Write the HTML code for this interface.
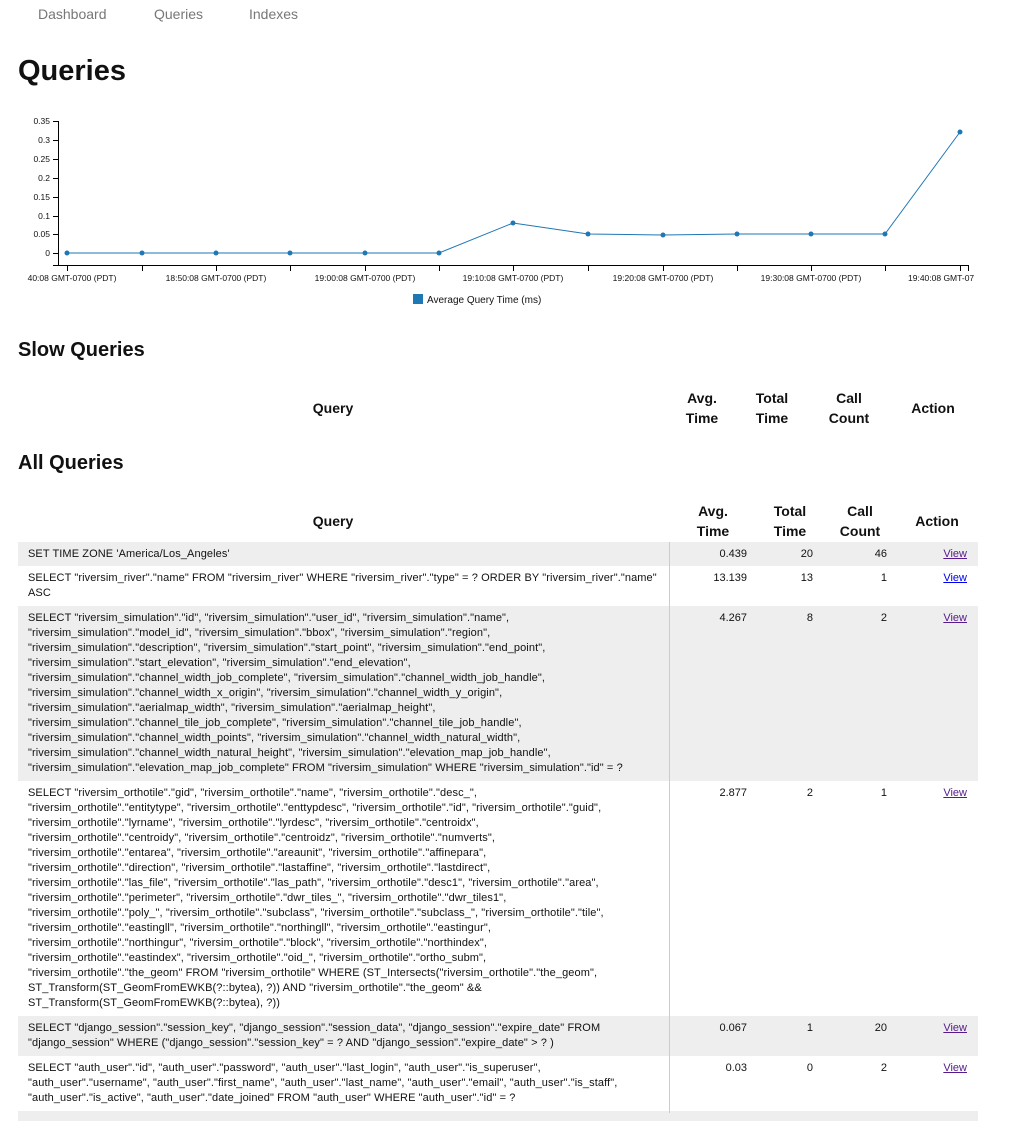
<!DOCTYPE html>
<html><head><meta charset="utf-8"><style>
*{margin:0;padding:0;box-sizing:border-box}
body{width:1018px;height:1113px;overflow:hidden;background:#fff;font-family:"Liberation Sans",sans-serif;color:#111;position:relative}
.a{position:absolute}
.nav{top:6px;font-size:14px;color:#777}
h1{position:absolute;left:18px;top:55px;font-size:29px;font-weight:bold}
h2{position:absolute;left:18px;font-size:20px;font-weight:bold}
.th{position:absolute;font-size:14px;font-weight:bold;text-align:center;line-height:20px;transform:translateX(-50%);white-space:nowrap}
.row{position:absolute;left:18px;width:960px}
.g{background:#eee}
.q{position:absolute;left:10px;top:5px;font-size:11px;line-height:15px;white-space:nowrap;letter-spacing:0.1px}
.n{position:absolute;top:5px;font-size:11px;line-height:15px;text-align:right;width:60px}
.v{position:absolute;top:5px;font-size:11px;line-height:15px;right:11px;color:#00e;text-decoration:underline}
.v.p{color:#551a8b}
.sep{position:absolute;left:669px;top:542px;width:1px;height:571px;background:#ccc}
</style></head><body>
<div class="a nav" style="left:38px">Dashboard</div>
<div class="a nav" style="left:154px">Queries</div>
<div class="a nav" style="left:249px">Indexes</div>
<h1>Queries</h1>
<svg class="a" style="left:0;top:110px" width="1018" height="200" viewBox="0 110 1018 200" font-family="Liberation Sans" font-size="8.5" fill="#111">
<g stroke="#000" stroke-width="1">
<line x1="58.5" y1="121" x2="58.5" y2="265"/>
<line x1="53" y1="265.5" x2="968" y2="265.5"/>
<line x1="968.5" y1="265" x2="968.5" y2="271"/>
<line x1="53" y1="121.5" x2="58" y2="121.5"/><line x1="53" y1="140.5" x2="58" y2="140.5"/><line x1="53" y1="159.5" x2="58" y2="159.5"/><line x1="53" y1="178.5" x2="58" y2="178.5"/><line x1="53" y1="197.5" x2="58" y2="197.5"/><line x1="53" y1="216.5" x2="58" y2="216.5"/><line x1="53" y1="234.5" x2="58" y2="234.5"/><line x1="53" y1="253.5" x2="58" y2="253.5"/>
<line x1="67.5" y1="265" x2="67.5" y2="271"/><line x1="142.5" y1="265" x2="142.5" y2="271"/><line x1="216.5" y1="265" x2="216.5" y2="271"/><line x1="290.5" y1="265" x2="290.5" y2="271"/><line x1="365.5" y1="265" x2="365.5" y2="271"/><line x1="439.5" y1="265" x2="439.5" y2="271"/><line x1="513.5" y1="265" x2="513.5" y2="271"/><line x1="588.5" y1="265" x2="588.5" y2="271"/><line x1="663.5" y1="265" x2="663.5" y2="271"/><line x1="737.5" y1="265" x2="737.5" y2="271"/><line x1="811.5" y1="265" x2="811.5" y2="271"/><line x1="885.5" y1="265" x2="885.5" y2="271"/><line x1="960.5" y1="265" x2="960.5" y2="271"/>
</g>
<g text-anchor="end">
<text x="50" y="124">0.35</text><text x="50" y="143">0.3</text><text x="50" y="162">0.25</text><text x="50" y="181">0.2</text><text x="50" y="200">0.15</text><text x="50" y="219">0.1</text><text x="50" y="237">0.05</text><text x="50" y="256">0</text>
</g>
<g text-anchor="middle">
<text x="72" y="281">40:08 GMT-0700 (PDT)</text><text x="216" y="281">18:50:08 GMT-0700 (PDT)</text><text x="365" y="281">19:00:08 GMT-0700 (PDT)</text><text x="513" y="281">19:10:08 GMT-0700 (PDT)</text><text x="663" y="281">19:20:08 GMT-0700 (PDT)</text><text x="811" y="281">19:30:08 GMT-0700 (PDT)</text>
<text x="960" y="281" text-anchor="start" dx="-52">19:40:08 GMT-07</text>
</g>
<polyline fill="none" stroke="#1f77b4" stroke-width="1" points="67,253 142,253 216,253 290,253 365,253 439,253 513,223 588,234 663,235 737,234 811,234 885,234 960,132"/>
<g fill="#1f77b4">
<circle cx="67" cy="253" r="2.5"/><circle cx="142" cy="253" r="2.5"/><circle cx="216" cy="253" r="2.5"/><circle cx="290" cy="253" r="2.5"/><circle cx="365" cy="253" r="2.5"/><circle cx="439" cy="253" r="2.5"/><circle cx="513" cy="223" r="2.5"/><circle cx="588" cy="234" r="2.5"/><circle cx="663" cy="235" r="2.5"/><circle cx="737" cy="234" r="2.5"/><circle cx="811" cy="234" r="2.5"/><circle cx="885" cy="234" r="2.5"/><circle cx="960" cy="132" r="2.5"/>
<rect x="413" y="294" width="10" height="10"/>
</g>
<text x="427" y="303" font-size="10">Average Query Time (ms)</text>
</svg>

<h2 style="top:339px">Slow Queries</h2>
<div class="th" style="left:333px;top:398px">Query</div>
<div class="th" style="left:702px;top:388px">Avg.<br>Time</div>
<div class="th" style="left:772px;top:388px">Total<br>Time</div>
<div class="th" style="left:849px;top:388px">Call<br>Count</div>
<div class="th" style="left:933px;top:398px">Action</div>

<h2 style="top:452px">All Queries</h2>
<div class="th" style="left:333px;top:511px">Query</div>
<div class="th" style="left:713px;top:501px">Avg.<br>Time</div>
<div class="th" style="left:790px;top:501px">Total<br>Time</div>
<div class="th" style="left:860px;top:501px">Call<br>Count</div>
<div class="th" style="left:937px;top:511px">Action</div>

<div class="row g" style="top:542px;height:24px"><div class="q">SET TIME ZONE 'America/Los_Angeles'</div><div class="n" style="left:669px">0.439</div><div class="n" style="left:735px">20</div><div class="n" style="left:809px">46</div><div class="v p">View</div></div>
<div class="row" style="top:566px;height:40px"><div class="q">SELECT "riversim_river"."name" FROM "riversim_river" WHERE "riversim_river"."type" = ? ORDER BY "riversim_river"."name"<br>ASC</div><div class="n" style="left:669px">13.139</div><div class="n" style="left:735px">13</div><div class="n" style="left:809px">1</div><div class="v">View</div></div>
<div class="row g" style="top:606px;height:175px"><div class="q">SELECT "riversim_simulation"."id", "riversim_simulation"."user_id", "riversim_simulation"."name",<br>"riversim_simulation"."model_id", "riversim_simulation"."bbox", "riversim_simulation"."region",<br>"riversim_simulation"."description", "riversim_simulation"."start_point", "riversim_simulation"."end_point",<br>"riversim_simulation"."start_elevation", "riversim_simulation"."end_elevation",<br>"riversim_simulation"."channel_width_job_complete", "riversim_simulation"."channel_width_job_handle",<br>"riversim_simulation"."channel_width_x_origin", "riversim_simulation"."channel_width_y_origin",<br>"riversim_simulation"."aerialmap_width", "riversim_simulation"."aerialmap_height",<br>"riversim_simulation"."channel_tile_job_complete", "riversim_simulation"."channel_tile_job_handle",<br>"riversim_simulation"."channel_width_points", "riversim_simulation"."channel_width_natural_width",<br>"riversim_simulation"."channel_width_natural_height", "riversim_simulation"."elevation_map_job_handle",<br>"riversim_simulation"."elevation_map_job_complete" FROM "riversim_simulation" WHERE "riversim_simulation"."id" = ?</div><div class="n" style="left:669px">4.267</div><div class="n" style="left:735px">8</div><div class="n" style="left:809px">2</div><div class="v p">View</div></div>
<div class="row" style="top:781px;height:235px"><div class="q">SELECT "riversim_orthotile"."gid", "riversim_orthotile"."name", "riversim_orthotile"."desc_",<br>"riversim_orthotile"."entitytype", "riversim_orthotile"."enttypdesc", "riversim_orthotile"."id", "riversim_orthotile"."guid",<br>"riversim_orthotile"."lyrname", "riversim_orthotile"."lyrdesc", "riversim_orthotile"."centroidx",<br>"riversim_orthotile"."centroidy", "riversim_orthotile"."centroidz", "riversim_orthotile"."numverts",<br>"riversim_orthotile"."entarea", "riversim_orthotile"."areaunit", "riversim_orthotile"."affinepara",<br>"riversim_orthotile"."direction", "riversim_orthotile"."lastaffine", "riversim_orthotile"."lastdirect",<br>"riversim_orthotile"."las_file", "riversim_orthotile"."las_path", "riversim_orthotile"."desc1", "riversim_orthotile"."area",<br>"riversim_orthotile"."perimeter", "riversim_orthotile"."dwr_tiles_", "riversim_orthotile"."dwr_tiles1",<br>"riversim_orthotile"."poly_", "riversim_orthotile"."subclass", "riversim_orthotile"."subclass_", "riversim_orthotile"."tile",<br>"riversim_orthotile"."eastingll", "riversim_orthotile"."northingll", "riversim_orthotile"."eastingur",<br>"riversim_orthotile"."northingur", "riversim_orthotile"."block", "riversim_orthotile"."northindex",<br>"riversim_orthotile"."eastindex", "riversim_orthotile"."oid_", "riversim_orthotile"."ortho_subm",<br>"riversim_orthotile"."the_geom" FROM "riversim_orthotile" WHERE (ST_Intersects("riversim_orthotile"."the_geom",<br>ST_Transform(ST_GeomFromEWKB(?::bytea), ?)) AND "riversim_orthotile"."the_geom" &amp;&amp;<br>ST_Transform(ST_GeomFromEWKB(?::bytea), ?))</div><div class="n" style="left:669px">2.877</div><div class="n" style="left:735px">2</div><div class="n" style="left:809px">1</div><div class="v p">View</div></div>
<div class="row g" style="top:1016px;height:40px"><div class="q">SELECT "django_session"."session_key", "django_session"."session_data", "django_session"."expire_date" FROM<br>"django_session" WHERE ("django_session"."session_key" = ? AND "django_session"."expire_date" &gt; ? )</div><div class="n" style="left:669px">0.067</div><div class="n" style="left:735px">1</div><div class="n" style="left:809px">20</div><div class="v p">View</div></div>
<div class="row" style="top:1056px;height:55px"><div class="q">SELECT "auth_user"."id", "auth_user"."password", "auth_user"."last_login", "auth_user"."is_superuser",<br>"auth_user"."username", "auth_user"."first_name", "auth_user"."last_name", "auth_user"."email", "auth_user"."is_staff",<br>"auth_user"."is_active", "auth_user"."date_joined" FROM "auth_user" WHERE "auth_user"."id" = ?</div><div class="n" style="left:669px">0.03</div><div class="n" style="left:735px">0</div><div class="n" style="left:809px">2</div><div class="v p">View</div></div>
<div class="row g" style="top:1111px;height:10px"></div>
<div class="sep"></div>
</body></html>
